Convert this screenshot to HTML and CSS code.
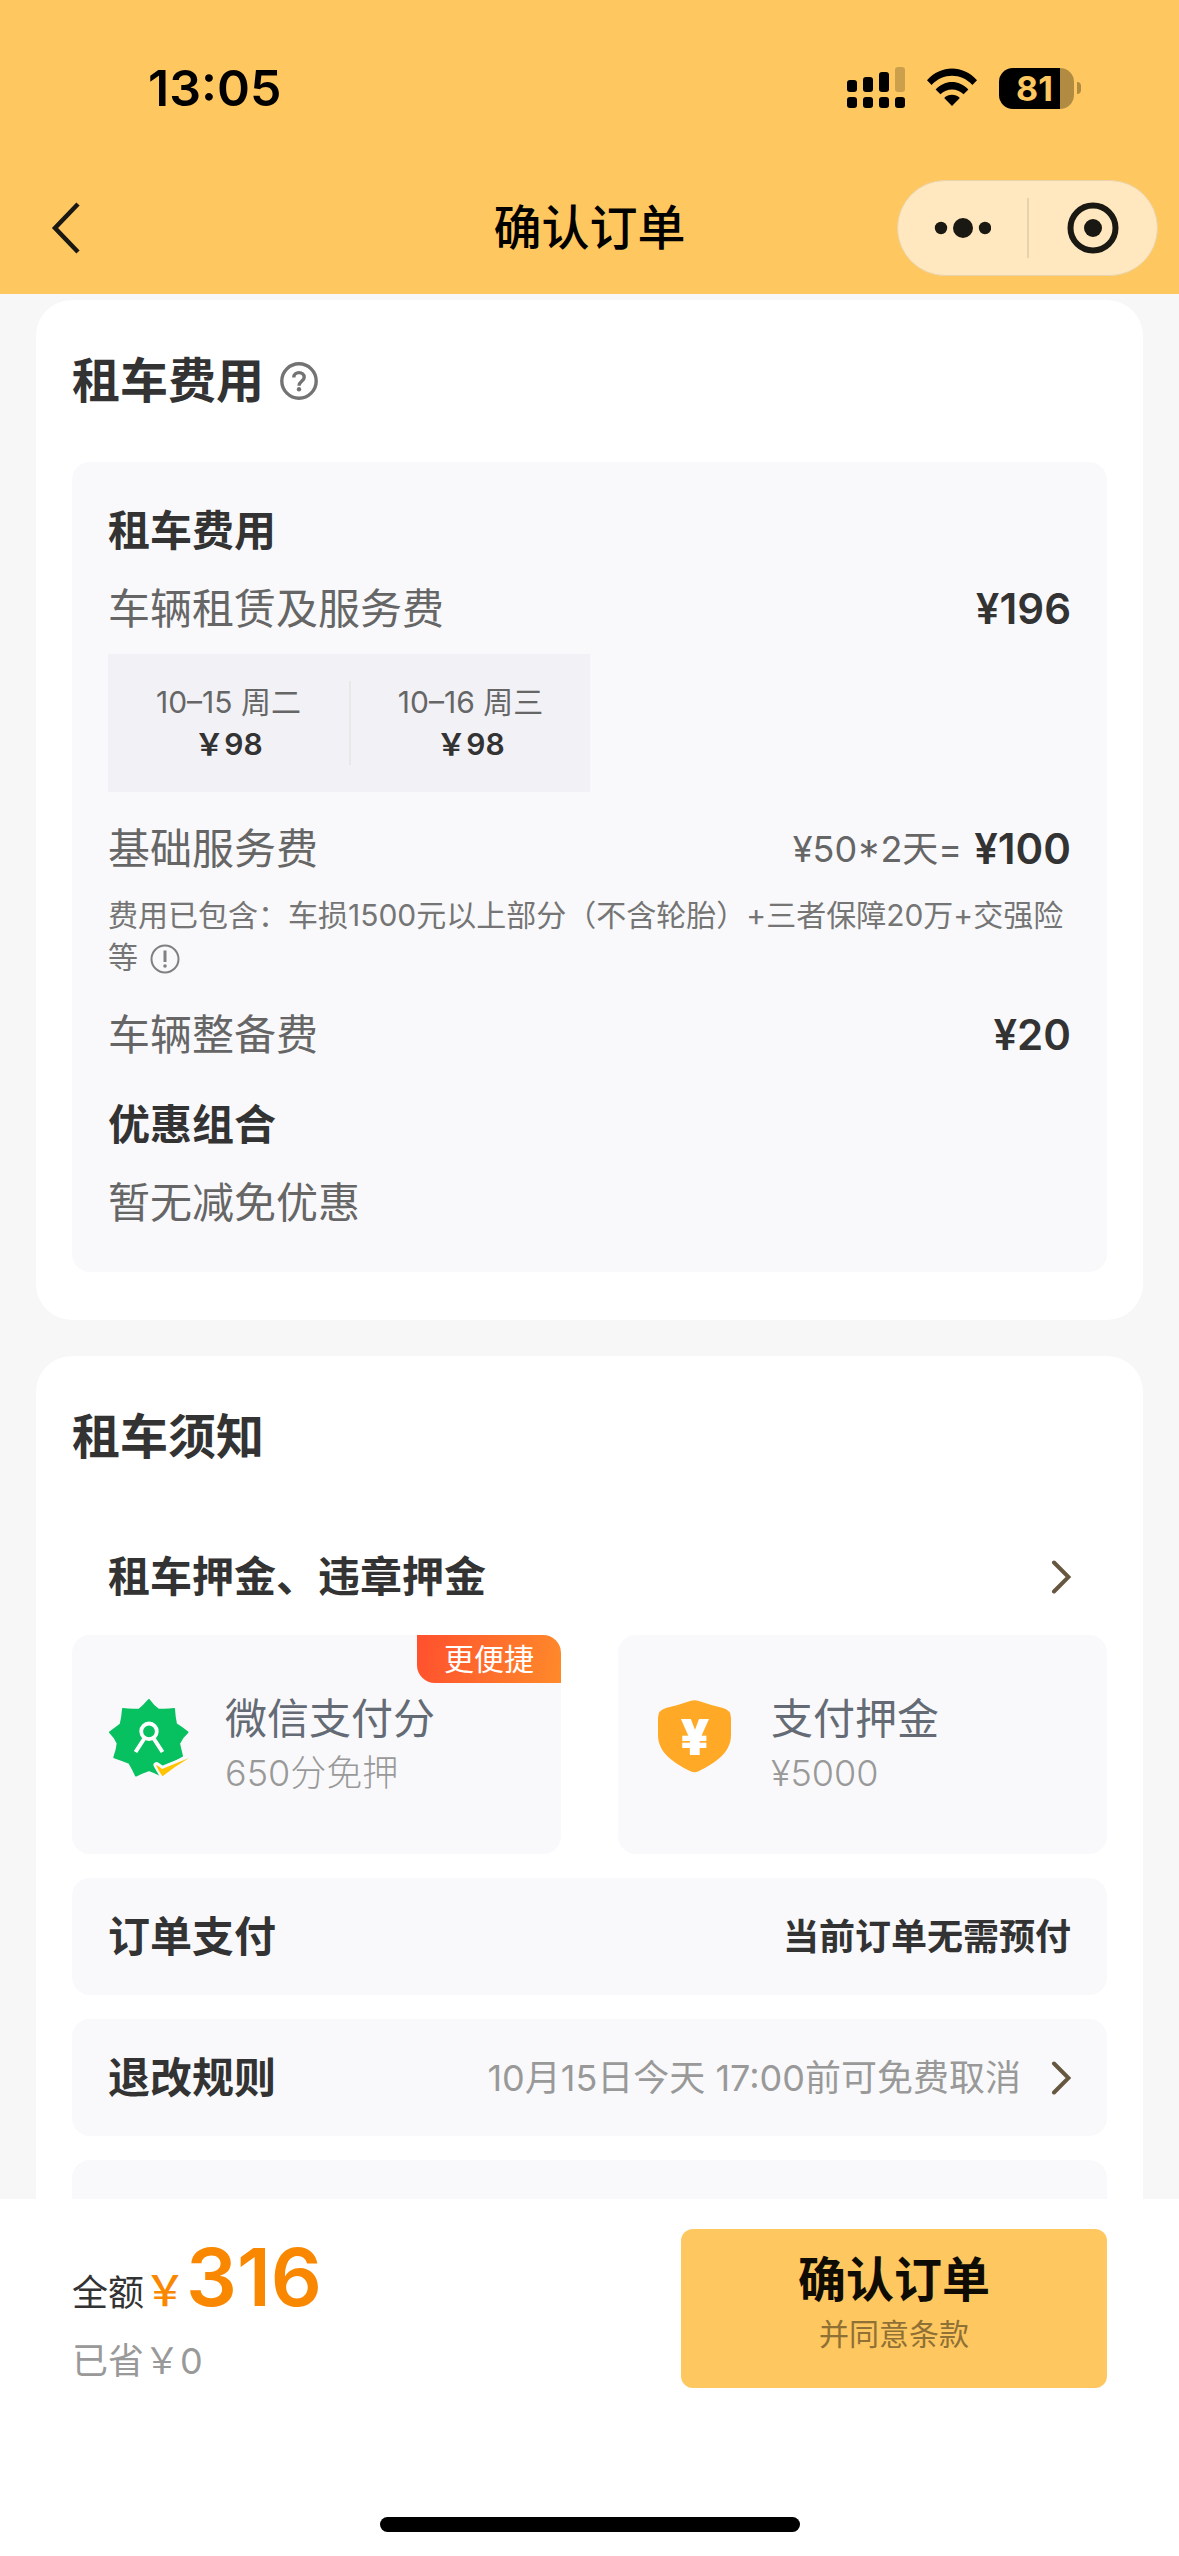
FILE: index.html
```html
<!DOCTYPE html>
<html lang="zh-CN">
<head>
<meta charset="utf-8">
<meta name="viewport" content="width=device-width, initial-scale=1">
<title>确认订单</title>
<link rel="stylesheet" href="styles.css">
</head>
<body>
<div class="app">
  <header class="top">
    <div class="status">
      <time class="clock">13:05</time>
      <div class="indicators">
        <svg class="signal" width="58" height="42" viewBox="0 0 58 42" aria-hidden="true">
          <rect x="0" y="13" width="10" height="12" rx="3"/>
          <rect x="16" y="10" width="10" height="15" rx="3"/>
          <rect x="32" y="5" width="10" height="20" rx="3"/>
          <rect x="48" y="0" width="10" height="25" rx="3" opacity=".2"/>
          <rect x="0" y="30" width="10" height="11" rx="3"/>
          <rect x="16" y="30" width="10" height="11" rx="3"/>
          <rect x="32" y="30" width="10" height="11" rx="3"/>
          <rect x="48" y="30" width="10" height="11" rx="3"/>
        </svg>
        <svg class="wifi" width="50" height="42" viewBox="0 0 50 42" aria-hidden="true">
          <path d="M0 13.2C14-2.4 36-2.4 50 13.2L45.400 18C34 5.800 16 5.800 4.600 18Z"/>
          <path d="M8.600 22.400C18 12.400 32 12.400 41.400 22.400L36.600 27.200C30 20.800 20 20.800 13.400 27.200Z"/>
          <path d="M17.200 31C21.500 26.600 28.500 26.600 32.800 31L25 39Z"/>
        </svg>
        <span class="battery"><span class="battery-body">81</span><span class="battery-tip"></span></span>
      </div>
    </div>
    <nav class="nav">
      <button class="back" type="button" aria-label="返回">
        <svg width="32" height="54" viewBox="0 0 32 54" aria-hidden="true"><path d="M28 3L5 27l23 24" fill="none" stroke="#1a1813" stroke-width="4.500"/></svg>
      </button>
      <h1 class="nav-title">确认订单</h1>
      <div class="capsule">
        <button class="capsule-btn" type="button" aria-label="更多">
          <svg width="58" height="52" viewBox="0 0 58 52" aria-hidden="true"><g fill="#1a1813"><circle cx="8" cy="26" r="6.200"/><circle cx="30" cy="26" r="10"/><circle cx="52" cy="26" r="6.200"/></g></svg>
        </button>
        <span class="capsule-line"></span>
        <button class="capsule-btn" type="button" aria-label="关闭">
          <svg width="52" height="52" viewBox="0 0 52 52" aria-hidden="true"><circle cx="26" cy="26" r="22.500" fill="none" stroke="#1a1813" stroke-width="6"/><circle cx="26" cy="26" r="9" fill="#1a1813"/></svg>
        </button>
      </div>
    </nav>
  </header>

  <main class="content">
    <section class="card">
      <h2 class="card-title">租车费用
        <button class="help" type="button" aria-label="费用说明">
          <svg width="38" height="38" viewBox="0 0 38 38" fill="none" stroke="#737373" aria-hidden="true"><circle cx="19" cy="19" r="17.200" stroke-width="3.400"/><path d="M13.800 15.500C13.800 9 24.200 9 24.200 15.200c0 4-5.200 4.300-5.200 8.600" stroke-width="3.400"/><circle cx="19" cy="27.300" r="2.200" fill="#737373" stroke="none"/></svg>
        </button>
      </h2>
      <div class="panel">
        <h3 class="line-title">租车费用</h3>
        <div class="line near"><span>车辆租赁及服务费</span><strong class="price">¥196</strong></div>
        <ul class="days">
          <li class="day"><span>10–15 周二</span><b class="day-price">￥98</b></li>
          <li class="day"><span>10–16 周三</span><b class="day-price">￥98</b></li>
        </ul>
        <div class="line far"><span>基础服务费</span><span class="sum"><span class="formula">¥50*2天=</span><strong class="price">¥100</strong></span></div>
        <p class="note">费用已包含：车损1500元以上部分（不含轮胎）+三者保障20万+交强险等
          <svg class="note-icon" width="30" height="30" viewBox="0 0 30 30" fill="none" stroke="#808080" aria-hidden="true"><circle cx="15" cy="15" r="13.500" stroke-width="2"/><path d="M15 6.500V18" stroke-width="3"/><circle cx="15" cy="22" r="1.800" fill="#808080" stroke="none"/></svg>
        </p>
        <div class="line far"><span>车辆整备费</span><strong class="price">¥20</strong></div>
        <h3 class="line-title far">优惠组合</h3>
        <p class="line near">暂无减免优惠</p>
      </div>
    </section>

    <section class="card">
      <h2 class="card-title">租车须知</h2>
      <a class="row plain" href="#deposit"><span class="row-title">租车押金、违章押金</span>
        <svg class="chevron" width="20" height="34" viewBox="0 0 20 34" aria-hidden="true"><path d="M3 2.500L17.500 17 3 31.500"/></svg>
      </a>
      <div class="options">
        <button class="option" type="button">
          <span class="tag">更便捷</span>
          <svg class="option-icon" width="84" height="96" viewBox="0 0 84 96" aria-hidden="true">
            <path d="M41 11Q45 17 50.300 20.500Q59 21 66 20Q66.500 28 68 35Q73 38 79.500 43.300Q74 48 71 54.600Q72.500 61 74 67Q67 71 61.600 74Q57 79 54.200 87Q47 83 41 81Q34 83.500 28 86.500Q25 80 21.300 73.700Q14 71 6.300 68.300Q9 61 9.700 54.300Q7 48 2 43.300Q8 39 12.700 35.300Q14.500 28 15 20Q22 21 31.300 20.500Q36 17 41 11Z" fill="#07c160" stroke="#07c160" stroke-width="2" stroke-linejoin="round"/>
            <circle cx="41" cy="42.300" r="7.800" fill="none" stroke="#fff" stroke-width="3.800"/>
            <path d="M36 50L27.500 63M46 50L54.500 63" fill="none" stroke="#fff" stroke-width="4"/>
            <path d="M48.500 76L54 80 80 69.500 54.500 86.500Z" fill="#f9f9fb" stroke="#f9f9fb" stroke-width="6" stroke-linejoin="round"/>
            <path d="M48 76Q51 77 54 80L81 69Q66 78 54.500 87.300Q50.500 82 48 76Z" fill="#ffc300"/>
          </svg>
          <span class="option-text"><span class="option-name">微信支付分</span><span class="option-sub">650分免押</span></span>
        </button>
        <button class="option" type="button">
          <svg class="option-icon" width="84" height="96" viewBox="0 0 84 96" aria-hidden="true">
            <path d="M37 11.800Q40.500 10.500 44 11.800Q56 16 69 19Q77 21 77 29V46C77 64 61 74 45 82Q40.500 84.500 36 82C20 74 4 64 4 46V29Q4 21 12 19Q25 16 37 11.800Z" fill="#ffa927"/>
            <text class="shield-sign" x="41" y="66" text-anchor="middle">¥</text>
          </svg>
          <span class="option-text"><span class="option-name">支付押金</span><span class="option-sub">¥5000</span></span>
        </button>
      </div>
      <div class="row"><span class="row-title">订单支付</span><strong class="row-strong">当前订单无需预付</strong></div>
      <a class="row" href="#cancel"><span class="row-title">退改规则</span><span class="row-value">10月15日今天 17:00前可免费取消</span>
        <svg class="chevron" width="20" height="34" viewBox="0 0 20 34" aria-hidden="true"><path d="M3 2.500L17.500 17 3 31.500"/></svg>
      </a>
      <div class="row"></div>
    </section>
  </main>

  <footer class="bar">
    <div class="bar-main">
      <div class="total">
        <p class="total-line"><span>全额</span><span class="yen">￥</span><strong class="amount">316</strong></p>
        <p class="saved">已省￥0</p>
      </div>
      <button class="submit" type="submit"><span class="submit-name">确认订单</span><span class="submit-sub">并同意条款</span></button>
    </div>
    <div class="home"></div>
  </footer>
</div>
</body>
</html>
```
FILE: styles.css
```css
* { box-sizing: border-box; }

body, h1, h2, h3, p, ul { margin: 0; padding: 0; }

body {
  background: #f7f7f7;
  color: #333;
  font-family: Inter, "Noto Sans CJK SC", sans-serif;
  font-size: 42px;
  line-height: 66px;
}

button {
  border: 0;
  padding: 0;
  background: none;
  color: inherit;
  font: inherit;
}

a { color: inherit; text-decoration: none; }
svg { display: block; flex: none; }

.app {
  display: flex;
  flex-direction: column;
  height: 100vh;
}

/* Status bar and navigation */
.top {
  flex: none;
  background: #ffc75f;
  color: #000;
  padding-bottom: 18px;
}

.status {
  display: flex;
  align-items: center;
  justify-content: space-between;
  height: 180px;
  padding: 0 98px 4px 148px;
}

.clock { font-size: 50px; font-weight: 600; }
.indicators { display: flex; align-items: center; gap: 22px; }

.battery { display: flex; align-items: center; gap: 3px; }

.battery-body {
  width: 75px;
  height: 41px;
  padding: 0 12px 0 8px;
  border-radius: 14px;
  background: linear-gradient(90deg, #000 61px, #b28b42 61px);
  color: #ffc75f;
  font-size: 34px;
  font-weight: 700;
  line-height: 41px;
  text-align: center;
}

.battery-tip {
  width: 4px;
  height: 12px;
  border-radius: 0 4px 4px 0;
  background: #b28b42;
}

.nav {
  display: grid;
  grid-template-columns: 1fr auto 1fr;
  align-items: center;
  height: 96px;
  padding: 0 21px;
}

.back { justify-self: start; padding-left: 29px; }
.nav-title { font-size: 48px; font-weight: 500; }

.capsule {
  justify-self: end;
  display: flex;
  align-items: center;
  width: 261px;
  height: 96px;
  border: 1px solid #ead3aa;
  border-radius: 48px;
  background: #ffe8bf;
}

.capsule-btn { display: flex; flex: 1; justify-content: center; }
.capsule-line { width: 2px; height: 60px; background: #e5d1ac; }

/* Scrolling content */
.content {
  flex: 1;
  min-height: 0;
  overflow: hidden auto;
  scrollbar-width: none;
  padding: 6px 36px 36px;
}

.card {
  margin-bottom: 36px;
  padding: 48px 36px;
  border-radius: 36px;
  background: #fff;
}

.card-title {
  display: flex;
  align-items: center;
  gap: 16px;
  margin-bottom: 48px;
  font-size: 48px;
  font-weight: 600;
}

.panel {
  padding: 36px;
  border-radius: 18px;
  background: #f9f9fb;
}

.line-title { font-size: 42px; font-weight: 600; }

.line {
  display: flex;
  justify-content: space-between;
  color: #666;
}

.near { margin-top: 12px; }
.far { margin-top: 24px; }
.sum { display: flex; gap: 12px; }
.formula { font-size: 36px; }
.price { color: #333; font-size: 42px; font-weight: 600; }

.days {
  display: inline-flex;
  vertical-align: top;
  margin-top: 12px;
  padding: 27px 0;
  background: #f2f1f6;
  list-style: none;
}

.day {
  display: flex;
  flex-direction: column;
  align-items: center;
  min-width: 241px;
  color: #666;
  font-size: 30px;
  line-height: 42px;
}

.day + .day { border-left: 2px solid #e8e8e8; }
.day-price { color: #333; font-weight: 600; }

.note {
  margin-top: 12px;
  color: #757575;
  font-size: 30px;
  line-height: 42px;
}

.note-icon { display: inline-block; margin-left: 4px; vertical-align: -6px; }

/* Notice rows */
.row {
  display: flex;
  align-items: center;
  min-height: 117px;
  margin-top: 24px;
  padding: 0 36px;
  border-radius: 18px;
  background: #f9f9fb;
}

.plain { margin-top: 0; background: none; }
.row-title { margin-right: auto; font-size: 42px; font-weight: 600; }
.row-strong { font-size: 36px; font-weight: 600; }
.row-value { margin-right: 30px; color: #999; font-size: 36px; }
.chevron path { fill: none; stroke: #665840; stroke-width: 4; stroke-linecap: round; }

.options {
  display: grid;
  grid-template-columns: 1fr 1fr;
  gap: 57px;
}

.option {
  position: relative;
  display: flex;
  align-items: flex-start;
  gap: 33px;
  padding: 54px 36px 57px;
  border-radius: 18px;
  background: #f9f9fb;
  text-align: left;
}

.option-text { display: flex; flex-direction: column; }
.option-name { color: #646b75; font-size: 42px; line-height: 60px; }
.option-sub { color: #999; font-size: 36px; font-weight: 300; line-height: 48px; }
.shield-sign { fill: #fff; font-size: 50px; font-weight: 900; }

.tag {
  position: absolute;
  top: 0;
  right: 0;
  padding: 0 27px;
  border-radius: 0 18px;
  background: linear-gradient(100deg, #ff502e, #ff8a2a);
  color: #fff;
  font-size: 30px;
  line-height: 48px;
}

/* Payment bar */
.bar {
  flex: none;
  padding: 30px 72px 24px;
  background: #fff;
}

.bar-main {
  display: flex;
  align-items: flex-start;
  justify-content: space-between;
}

.total { font-size: 36px; }
.total-line { display: flex; align-items: baseline; line-height: 48px; }
.yen { color: #fa8700; font-size: 42px; font-weight: 500; }
.amount { color: #fa8700; font-size: 80px; font-weight: 600; line-height: 96px; }
.saved { color: #999; line-height: 72px; }

.submit {
  display: flex;
  flex-direction: column;
  align-items: center;
  width: 426px;
  padding: 18px 0 33px;
  border-radius: 12px;
  background: #ffc75f;
}

.submit-name { color: #0f0c06; font-size: 48px; font-weight: 600; }
.submit-sub { color: #8f7035; font-size: 30px; line-height: 42px; }

.home {
  width: 420px;
  height: 15px;
  margin: 120px auto 0;
  border-radius: 8px;
  background: #000;
}
```
